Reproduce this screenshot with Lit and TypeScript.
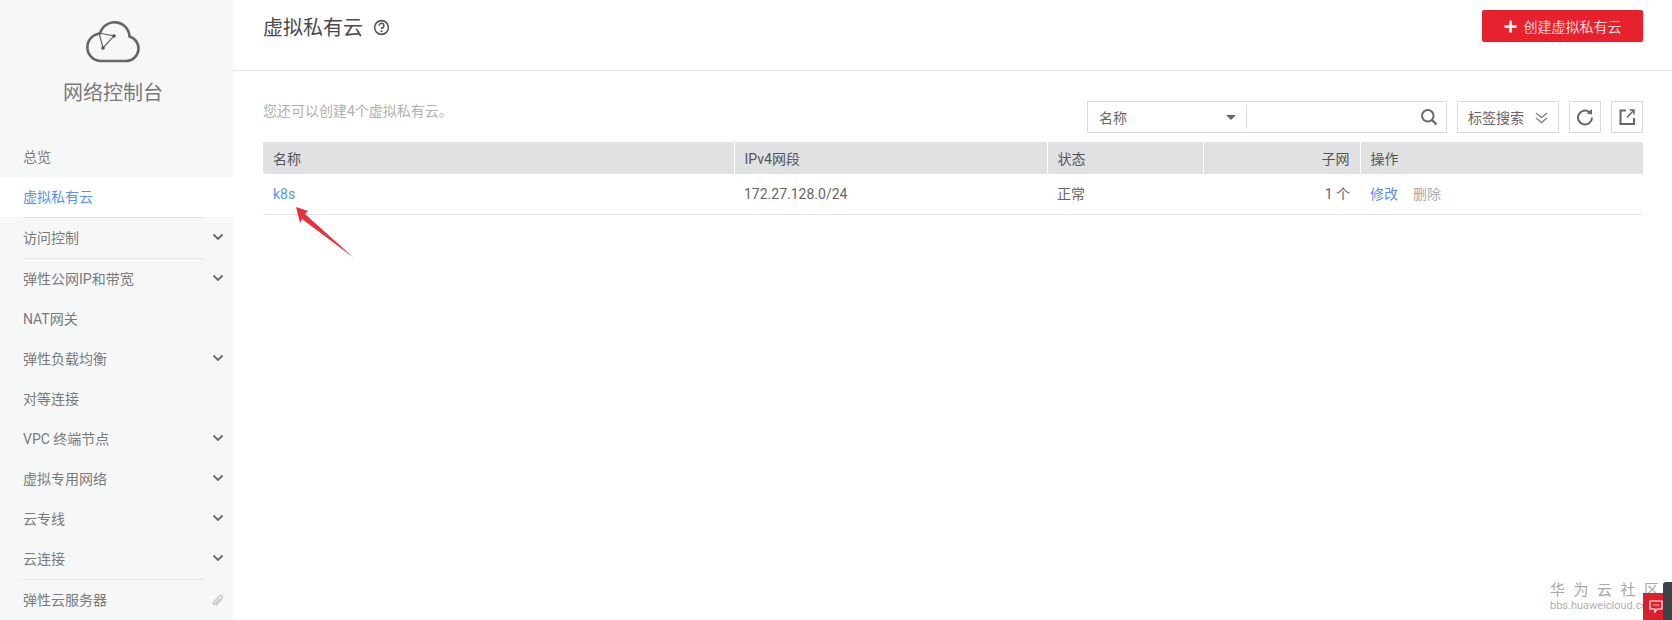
import { LitElement, html, css } from "lit";
import { customElement } from "lit/decorators.js";

const chevron = html`<svg class="chev" width="12" height="8" viewBox="0 0 12 8"><path d="M1.500 1.500 6 6l4.500-4.500" fill="none" stroke="currentColor" stroke-width="1.800"/></svg>`;
const linkIcon = html`<svg class="link" width="13" height="16" viewBox="0 0 13 14"><path d="M5 12.500 11 5.500c1.500-2-1.300-4-3-2.300L2.600 9.400c-1 1.300.7 2.500 1.700 1.500L9 5.500" fill="none" stroke="currentColor" stroke-width="1.600"/></svg>`;

type Item = { t: string; chev?: boolean; active?: boolean; link?: boolean; div?: boolean };
const items: Item[] = [
  { t: "总览" },
  { t: "虚拟私有云", active: true, div: true },
  { t: "访问控制", chev: true, div: true },
  { t: "弹性公网IP和带宽", chev: true },
  { t: "NAT网关" },
  { t: "弹性负载均衡", chev: true },
  { t: "对等连接" },
  { t: "VPC 终端节点", chev: true },
  { t: "虚拟专用网络", chev: true },
  { t: "云专线", chev: true },
  { t: "云连接", chev: true, div: true },
  { t: "弹性云服务器", link: true },
];

@customElement("app-root")
export class AppRoot extends LitElement {
  static styles = css`
    :host {
      display: block;
      position: relative;
      width: 1672px;
      height: 620px;
      overflow: hidden;
      background: #fff;
      font-family: Roboto, "Noto Sans CJK SC", sans-serif;
      font-size: 14px;
      color: #666;
    }
    .page { display: flex; height: 620px; }
    .side { width: 233px; flex: none; background: #f6f8f8; overflow: hidden; }
    .brand { height: 137px; box-sizing: border-box; padding: 21px 7px 0 0; display: flex; flex-direction: column; align-items: center; }
    .brand-title { margin-top: 15px; font-size: 20px; line-height: 30px; color: #7a7a7a; }
    .item { height: 40px; display: flex; align-items: center; justify-content: space-between; padding: 0 9px 0 23px; color: #7a7a7a; line-height: 20px; }
    .item.active { background: #fff; color: #5b93e0; }
    .divider { height: 1px; background: #e0e2e3; margin: 0 30px 0 23px; }
    .chev { color: #666; display: block; margin-top: -2px; }
    .link { color: #ccc; display: block; }
    .main { flex: 1; min-width: 0; }
    .head { box-sizing: border-box; height: 71px; padding: 10px 29px 0 30px; display: flex; justify-content: space-between; align-items: flex-start; border-bottom: 1px solid #e6e8e8; }
    .title { display: flex; align-items: center; gap: 10px; height: 32px; font-size: 20px; color: #4a4a4a; }
    .title svg { display: block; margin-top: 2px; }
    .create { width: 161px; height: 32px; background: #e8212e; color: #fbdcdc; border-radius: 2px; display: flex; align-items: center; justify-content: center; gap: 7px; }
    .create svg { display: block; }
    .body { padding: 30px 29px 0 30px; }
    .bar { display: flex; align-items: flex-start; height: 32px; margin-bottom: 9px; }
    .hint { flex: 1; color: #b0b0b0; line-height: 20px; }
    .search { width: 360px; height: 32px; box-sizing: border-box; border: 1px solid #d9dcdd; display: flex; align-items: center; }
    .sel { width: 159px; height: 24px; box-sizing: border-box; display: flex; align-items: center; justify-content: space-between; padding: 0 10px 0 11px; border-right: 1px solid #d9dcdd; }
    .caret { width: 0; height: 0; border-left: 5px solid transparent; border-right: 5px solid transparent; border-top: 5px solid #666; }
    .search .sp { flex: 1; }
    .search svg { display: block; margin-right: 8px; }
    .tag { margin-left: 10px; width: 102px; height: 32px; box-sizing: border-box; border: 1px solid #d9dcdd; display: flex; align-items: center; justify-content: space-between; padding: 0 9px 0 10px; }
    .ibtn { margin-left: 10px; width: 32px; height: 32px; box-sizing: border-box; border: 1px solid #d9dcdd; display: flex; align-items: center; justify-content: center; }
    table { border-collapse: collapse; width: 1380px; table-layout: fixed; }
    th { height: 32px; background: #dfe1e3; font-weight: 400; text-align: left; padding: 0 10px; color: #555; border-right: 1px solid #fff; box-sizing: border-box; }
    th:last-child { border-right: 0; }
    td { height: 40px; padding: 0 10px 2px; box-sizing: border-box; border-bottom: 1px solid #e4e6e8; color: #666; }
    td.lat { padding-bottom: 0; }
    .right { text-align: right; padding-right: 10px; }
    a { color: #5b93e0; text-decoration: none; }
    .off { color: #aaa; margin-left: 15px; }
    .arrow { position: absolute; left: 290px; top: 200px; display: block; }
    .wm { position: absolute; right: 4px; top: 580px; width: 118px; color: #a8a8a8; }
    .wm-a { font-size: 15px; letter-spacing: 8.500px; line-height: 20px; white-space: nowrap; }
    .wm-b { font-size: 11px; line-height: 11px; white-space: nowrap; color: #b0b0b0; }
    .badge { position: absolute; left: 1643px; top: 593px; width: 25px; height: 27px; background: #d9202c; display: flex; align-items: center; justify-content: center; }
    .dark { position: absolute; left: 1663px; top: 582px; width: 9px; height: 38px; background: #3d4248; border-radius: 3px 0 0 0; }
  `;

  render() {
    return html`
      <div class="page">
        <aside class="side">
          <div class="brand">
            <svg width="56" height="42" viewBox="0 0 56 42">
              <path d="M15 40H41A12.500 12.500 0 0 0 44.500 15.500A15 15 0 0 0 15 12.500A13.800 13.800 0 0 0 15 40Z" fill="none" stroke="#666" stroke-width="2.600"/>
              <path d="M14 12 29 15 18 27Z" fill="none" stroke="#666" stroke-width="1.200"/>
              <circle cx="29" cy="15" r="1.800" fill="#555"/><circle cx="18" cy="27" r="1.800" fill="#555"/>
            </svg>
            <div class="brand-title">网络控制台</div>
          </div>
          ${items.map(
            (i) => html`
              <div class="item ${i.active ? "active" : ""}">
                <span>${i.t}</span>${i.chev ? chevron : ""}${i.link ? linkIcon : ""}
              </div>
              ${i.div ? html`<div class="divider"></div>` : ""}
            `
          )}
        </aside>
        <main class="main">
          <div class="head">
            <div class="title">
              <span>虚拟私有云</span>
              <svg width="17" height="17" viewBox="0 0 16 16">
                <circle cx="8" cy="8" r="6.500" fill="none" stroke="#555" stroke-width="1.500"/>
                <path d="M5.800 6.300A2.200 2.200 0 1 1 8 8.500V9.500" fill="none" stroke="#555" stroke-width="1.400"/>
                <circle cx="8" cy="11.500" r="1" fill="#555"/>
              </svg>
            </div>
            <div class="create">
              <svg width="13" height="13" viewBox="0 0 13 13"><path d="M6.500 0.500v12M0.500 6.500h12" stroke="#fff" stroke-width="2.600"/></svg>
              <span>创建虚拟私有云</span>
            </div>
          </div>
          <div class="body">
            <div class="bar">
              <div class="hint">您还可以创建4个虚拟私有云。</div>
              <div class="search">
                <div class="sel"><span>名称</span><i class="caret"></i></div>
                <div class="sp"></div>
                <svg width="18" height="18" viewBox="0 0 18 18"><circle cx="7.800" cy="7.800" r="5.800" fill="none" stroke="#666" stroke-width="2"/><path d="M12 12l4.500 4.500" stroke="#666" stroke-width="2.400"/></svg>
              </div>
              <div class="tag">
                <span>标签搜索</span>
                <svg width="15" height="15" viewBox="0 0 15 15"><path d="M2 3l5.500 4.500L13 3M2 8l5.500 4.500L13 8" fill="none" stroke="#888" stroke-width="1.500"/></svg>
              </div>
              <div class="ibtn">
                <svg width="18" height="18" viewBox="0 0 18 18"><path d="M13.500 4.200A7 7 0 1 0 16 9.500" fill="none" stroke="#666" stroke-width="2"/><path d="M10.500 5.500 16 6.500V1Z" fill="#666"/></svg>
              </div>
              <div class="ibtn">
                <svg width="18" height="18" viewBox="0 0 18 18"><path d="M8 2.500H2.500V16H16V10" fill="none" stroke="#666" stroke-width="2"/><path d="M9 9.500 15 3M11.500 2H16V6.500" fill="none" stroke="#666" stroke-width="1.500"/></svg>
              </div>
            </div>
            <table>
              <colgroup><col style="width:471px"/><col style="width:313px"/><col style="width:156px"/><col style="width:157px"/><col/></colgroup>
              <thead>
                <tr><th>名称</th><th>IPv4网段</th><th>状态</th><th class="right">子网</th><th>操作</th></tr>
              </thead>
              <tbody>
                <tr>
                  <td class="lat"><a>k8s</a></td><td class="lat">172.27.128.0/24</td><td>正常</td><td class="right">1 个</td>
                  <td><a>修改</a><span class="off">删除</span></td>
                </tr>
              </tbody>
            </table>
          </div>
        </main>
      </div>
      <svg class="arrow" width="70" height="64" viewBox="290 200 70 64">
        <path d="M296 207 308 211 305 214 354 258 302 219 300 223Z" fill="#e8303e"/>
      </svg>
      <div class="wm">
        <div class="wm-a">华为云社区</div>
        <div class="wm-b">bbs.huaweicloud.com</div>
      </div>
      <div class="badge">
        <svg width="14" height="13" viewBox="0 0 14 13"><path d="M1 1H13V9H8L6 12V9H1Z" fill="none" stroke="#fff" stroke-width="1.200"/><path d="M4 5h1.500M6.300 5h1.500M8.600 5h1.500" stroke="#fff"/></svg>
      </div>
      <div class="dark"></div>
    `;
  }
}
